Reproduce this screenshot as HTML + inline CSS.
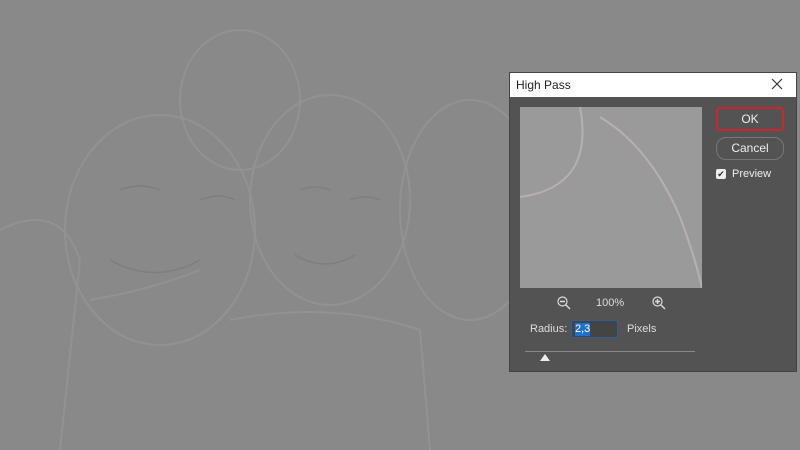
<!DOCTYPE html>
<html><head><style>
*{margin:0;padding:0;box-sizing:border-box}
body{width:800px;height:450px;overflow:hidden;background:#898989;font-family:"Liberation Sans",sans-serif;position:relative}
.a{position:absolute}
</style></head><body>
<svg class="a" style="left:0;top:0" width="800" height="450">
<g fill="none" stroke="#999" stroke-width="2" opacity=".6">
<ellipse cx="160" cy="230" rx="95" ry="115"/>
<ellipse cx="330" cy="200" rx="80" ry="105"/>
<ellipse cx="240" cy="100" rx="60" ry="70"/>
<ellipse cx="470" cy="210" rx="70" ry="110"/>
<path d="M0 230 Q60 200 80 260 L60 450"/>
<path d="M230 320 Q330 300 420 330 L430 450"/>
<path d="M90 300 Q150 290 200 270"/>
</g>
<g fill="none" stroke="#777" stroke-width="1.5" opacity=".6">
<path d="M120 190 q20 -8 40 0 M200 200 q20 -8 35 0 M300 190 q15 -6 30 0 M350 200 q15 -6 30 0"/>
<path d="M110 260 q45 25 90 0 M295 255 q30 18 60 0"/>
</g>
</svg>
<div class="a" style="left:509px;top:72px;width:288px;height:300px;background:#535353;border:1px solid #444"></div>
<div class="a" style="left:510px;top:73px;width:286px;height:24px;background:#fff"></div>
<div class="a" style="left:516px;top:78px;font-size:12px;color:#222">High Pass</div>
<svg class="a" style="left:771px;top:78px" width="12" height="12"><path d="M1 1L11 11M11 1L1 11" stroke="#333" stroke-width="1.2"/></svg>
<div class="a" style="left:520px;top:107px;width:182px;height:181px;background:#9a9a9a"></div>
<svg class="a" style="left:520px;top:107px" width="182" height="181"><g fill="none" stroke="#b8b0b0" stroke-width="2"><path d="M60 0 Q75 80 0 90"/><path d="M80 10 Q130 40 160 110 Q175 150 182 181"/></g></svg>
<div class="a" style="left:716px;top:107px;width:68px;height:24px;border:2px solid #d0242e;border-radius:4px;color:#eee;font-size:12px;text-align:center;line-height:20px">OK</div>
<div class="a" style="left:716px;top:137px;width:68px;height:23px;border:1px solid #777;border-radius:10px;color:#eee;font-size:12px;text-align:center;line-height:21px">Cancel</div>
<div class="a" style="left:716px;top:169px;width:10px;height:10px;background:#eee;border-radius:2px;color:#333;font-size:9px;line-height:10px;text-align:center">✔</div>
<div class="a" style="left:732px;top:168px;font-size:11px;color:#eee">Preview</div>
<svg class="a" style="left:557px;top:296px" width="14" height="14"><circle cx="5.5" cy="5.5" r="4.5" fill="none" stroke="#ddd" stroke-width="1.2"/><path d="M3 5.5h5M9 9l4 4" stroke="#ddd" stroke-width="1.4"/></svg>
<div class="a" style="left:596px;top:297px;font-size:11px;color:#ddd">100%</div>
<svg class="a" style="left:652px;top:296px" width="14" height="14"><circle cx="5.5" cy="5.5" r="4.5" fill="none" stroke="#ddd" stroke-width="1.2"/><path d="M3 5.5h5M5.5 3v5M9 9l4 4" stroke="#ddd" stroke-width="1.4"/></svg>
<div class="a" style="left:530px;top:323px;font-size:11px;color:#ddd">Radius:</div>
<div class="a" style="left:571px;top:320px;width:47px;height:18px;background:#444;border:1px solid #2f5f9a"></div>
<div class="a" style="left:575px;top:323px;font-size:11px;color:#fff;background:#1e6fd0;line-height:13px">2,3</div>
<div class="a" style="left:627px;top:323px;font-size:11px;color:#ddd">Pixels</div>
<div class="a" style="left:525px;top:351px;width:170px;height:1px;background:#888"></div>
<div class="a" style="left:540px;top:354px;width:0;height:0;border-left:5px solid transparent;border-right:5px solid transparent;border-bottom:7px solid #eee"></div>
</body></html>
